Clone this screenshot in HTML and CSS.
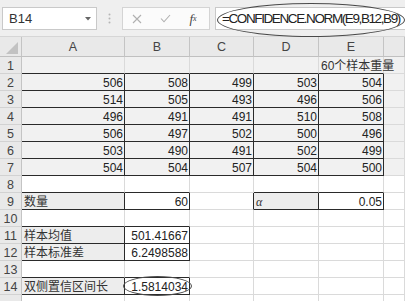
FILE: index.html
```html
<!DOCTYPE html>
<html>
	<head>
		<meta charset="UTF-8">
		<title>CONFIDENCE.NORM</title>
		<link rel="stylesheet" href="styles.css">
	</head>
	<body>

		<!--编辑栏-->
		<div class="toolbar">
			<div class="namebox">
				<span>B14</span>
				<svg class="arrow" width="6" height="4" viewBox="0 0 6 4"><polygon points="0,0 6,0 3,3.5" fill="#666"/></svg>
			</div>
			<div class="grip">
				<svg width="3" height="11" viewBox="0 0 3 11">
					<circle cx="1.5" cy="1.5" r="1" fill="#b5b5b5"/>
					<circle cx="1.5" cy="5.5" r="1" fill="#b5b5b5"/>
					<circle cx="1.5" cy="9.5" r="1" fill="#b5b5b5"/>
				</svg>
			</div>
			<div class="btns">
				<span class="btn">
					<svg width="10" height="10" viewBox="0 0 10 10"><path d="M1 1 L9 9 M9 1 L1 9" stroke="#b0b0b0" stroke-width="1.1" fill="none"/></svg>
				</span>
				<span class="btn">
					<svg width="11" height="9" viewBox="0 0 11 9"><path d="M1 4.5 L4 7.8 L10 1" stroke="#b0b0b0" stroke-width="1.1" fill="none"/></svg>
				</span>
				<span class="btn fx">f<sub>x</sub></span>
			</div>
			<div class="formula">=CONFIDENCE.NORM(E9,B12,B9)</div>
		</div>

		<!--工作表-->
		<table class="sheet">
			<colgroup>
				<col class="c-hd"><col class="c-a"><col class="c-b"><col class="c-c"><col class="c-d"><col class="c-e"><col class="c-f">
			</colgroup>
			<tr class="colhead">
				<th class="corner">
					<svg width="21" height="18" viewBox="0 0 21 18"><polygon points="18,4 18,16 6,16" fill="#c2c2c2"/></svg>
				</th>
				<th>A</th><th>B</th><th>C</th><th>D</th><th>E</th><th></th>
			</tr>
			<tr class="shade">
				<th>1</th>
				<td class="kb"></td><td class="kb"></td><td class="kb"></td><td class="kb"></td>
				<td class="kb title">60个样本重量</td><td></td>
			</tr>
			<tr class="shade">
				<th>2</th>
				<td class="k n">506</td><td class="k n">508</td><td class="k n">499</td><td class="k n">503</td><td class="k n">504</td><td></td>
			</tr>
			<tr class="shade">
				<th>3</th>
				<td class="k n">514</td><td class="k n">505</td><td class="k n">493</td><td class="k n">496</td><td class="k n">506</td><td></td>
			</tr>
			<tr class="shade">
				<th>4</th>
				<td class="k n">496</td><td class="k n">491</td><td class="k n">491</td><td class="k n">510</td><td class="k n">508</td><td></td>
			</tr>
			<tr class="shade">
				<th>5</th>
				<td class="k n">506</td><td class="k n">497</td><td class="k n">502</td><td class="k n">500</td><td class="k n">496</td><td></td>
			</tr>
			<tr class="shade">
				<th>6</th>
				<td class="k n">503</td><td class="k n">490</td><td class="k n">491</td><td class="k n">502</td><td class="k n">499</td><td></td>
			</tr>
			<tr class="shade">
				<th>7</th>
				<td class="k n">504</td><td class="k n">504</td><td class="k n">507</td><td class="k n">504</td><td class="k n">500</td><td></td>
			</tr>
			<tr>
				<th>8</th>
				<td class="kb"></td><td class="kb"></td><td></td><td class="kb"></td><td class="kb"></td><td></td>
			</tr>
			<tr>
				<th>9</th>
				<td class="k g label">数量</td><td class="k n">60</td><td class="kr"></td>
				<td class="k g alpha">α</td><td class="k n">0.05</td><td></td>
			</tr>
			<tr>
				<th>10</th>
				<td class="kb"></td><td class="kb"></td><td></td><td></td><td></td><td></td>
			</tr>
			<tr>
				<th>11</th>
				<td class="k g label">样本均值</td><td class="k n">501.41667</td><td></td><td></td><td></td><td></td>
			</tr>
			<tr>
				<th>12</th>
				<td class="k g label">样本标准差</td><td class="k n">6.2498588</td><td></td><td></td><td></td><td></td>
			</tr>
			<tr>
				<th>13</th>
				<td class="kb"></td><td class="kb"></td><td></td><td></td><td></td><td></td>
			</tr>
			<tr>
				<th>14</th>
				<td class="k g label">双侧置信区间长</td><td class="k n">1.5814034</td><td></td><td></td><td></td><td></td>
			</tr>
			<tr>
				<th></th>
				<td></td><td></td><td></td><td></td><td></td><td></td>
			</tr>
		</table>

		<!--手画的圈-->
		<div class="ring ring-formula"></div>
		<div class="ring ring-value"></div>

	</body>
</html>
```
FILE: styles.css
```css
/*去除默认样式*/
*{
	margin: 0;
	padding: 0;
}

body{
	width: 405px;
	height: 301px;
	overflow: hidden;
	position: relative;
	background-color: #fff;
	font-family: "Liberation Sans", "Noto Sans CJK SC", sans-serif;
	color: #222;
}

/*编辑栏*/
.toolbar{
	height: 37px;
	box-sizing: border-box;
	padding-top: 7px;
	display: flex;
	align-items: flex-start;
	background-color: #efefef;
	border-bottom: 1px solid #d6d6d6;
}

.namebox{
	margin-left: 2px;
	width: 95px;
	height: 23px;
	box-sizing: border-box;
	border: 1px solid #c9c9c9;
	background-color: #fff;
	display: flex;
	align-items: center;
	justify-content: space-between;
	padding: 0 5px 0 6px;
	font-size: 13px;
	color: #333;
}

.grip{
	width: 25px;
	height: 23px;
	display: flex;
	align-items: center;
	justify-content: center;
}

.btns{
	width: 88px;
	height: 23px;
	box-sizing: border-box;
	border: 1px solid #d4d4d4;
	background-color: #fbfbfb;
	display: flex;
	align-items: center;
}

.btn{
	width: 28px;
	height: 21px;
	display: flex;
	align-items: center;
	justify-content: center;
}

.fx{
	font-family: "Liberation Serif", serif;
	font-style: italic;
	font-size: 13px;
	color: #444;
}

.fx sub{
	font-size: 8px;
	vertical-align: -1px;
}

.formula{
	margin-left: 5px;
	flex: 1;
	height: 23px;
	box-sizing: border-box;
	border: 1px solid #c9c9c9;
	border-right: none;
	background-color: #fff;
	padding-left: 6px;
	font-size: 13.5px;
	letter-spacing: -1.4px;
	line-height: 21px;
	white-space: nowrap;
	overflow: hidden;
	color: #222;
}

/*工作表*/
.sheet{
	border-collapse: separate;
	border-spacing: 0;
	table-layout: fixed;
	width: 405px;
}

.c-hd{ width: 22px; }
.c-a{ width: 103px; }
.c-b{ width: 65px; }
.c-c{ width: 64px; }
.c-d{ width: 65px; }
.c-e{ width: 65px; }
.c-f{ width: 21px; }

.sheet tr{
	height: 17px;
}

.sheet td{
	padding: 0 1px 0 2px;
	vertical-align: bottom;
	line-height: 13px;
	font-size: 12px;
	white-space: nowrap;
	overflow: visible;
	background-color: #fff;
	border-right: 1px solid #dadada;
	border-bottom: 1px solid #dadada;
}

.sheet th{
	background-color: #e9e9e9;
	font-weight: normal;
	font-size: 12.5px;
	color: #444;
	line-height: 14px;
	vertical-align: bottom;
	padding: 0;
	border-right: 1px solid #c4c4c4;
	border-bottom: 1px solid #d2d2d2;
}

.colhead{
	height: 19px !important;
}

.colhead th{
	vertical-align: middle;
	border-bottom-color: #c0c0c0;
	padding-top: 1px;
}

.corner svg{
	display: block;
}

/*数据区的灰底*/
.shade td{
	background-color: #f1f1f1;
}

.g{
	background-color: #ededed !important;
}

/*黑色边框*/
.k{
	border-right-color: #2a2a2a !important;
	border-bottom-color: #2a2a2a !important;
}

.kb{
	border-bottom-color: #2a2a2a !important;
}

.kr{
	border-right-color: #2a2a2a !important;
}

.n{
	text-align: right;
}

.label{
	font-size: 13px;
	line-height: 15px;
	color: #333;
}

.alpha{
	font-family: "Liberation Serif", serif;
	font-style: italic;
	font-size: 15px;
	line-height: 14px;
	padding-left: 4px;
	color: #333;
}

.title{
	padding-left: 9px;
	font-size: 13px;
	line-height: 15px;
	color: #333;
}

/*圈*/
.ring{
	position: absolute;
	border: 1px solid #4a4a4a;
	border-radius: 50%;
}

.ring-formula{
	left: 217px;
	top: 3px;
	width: 186px;
	height: 32px;
}

.ring-value{
	left: 123px;
	top: 276px;
	width: 67px;
	height: 18px;
}
```
